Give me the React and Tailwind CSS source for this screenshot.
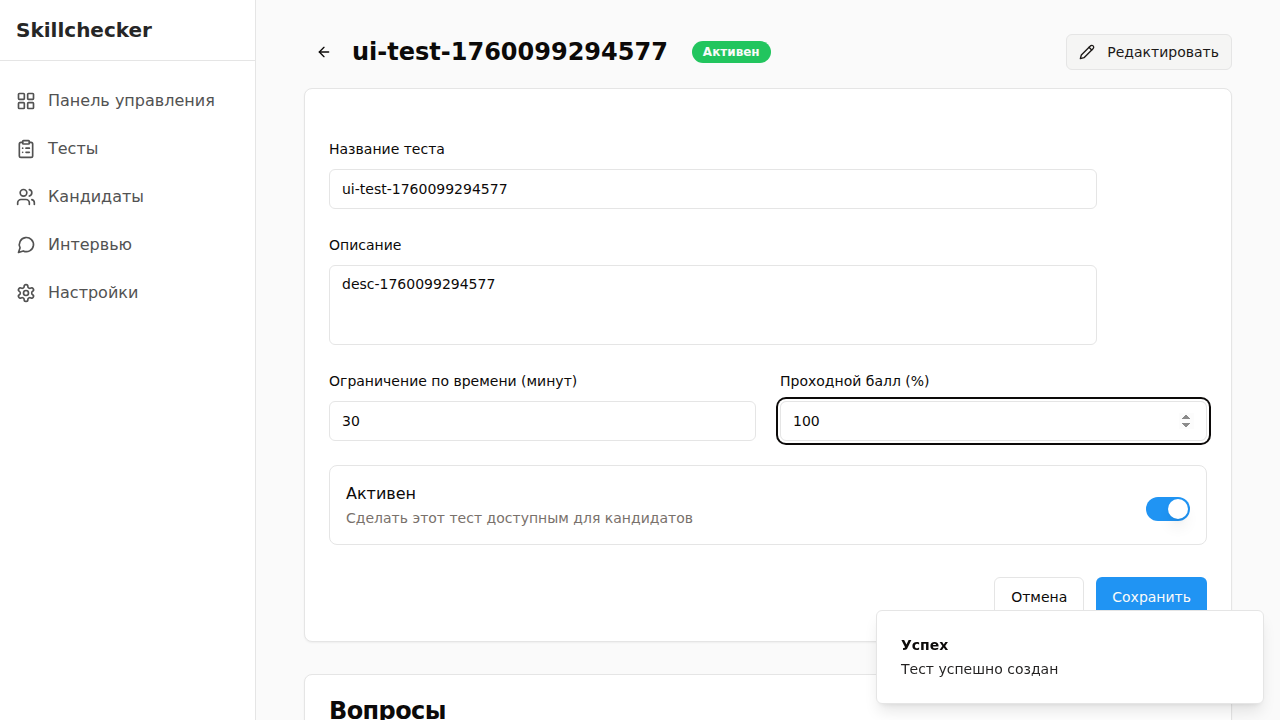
import React, { useState } from "react";
import { ArrowLeft, ClipboardList, LayoutGrid, Users } from "lucide-react";

function OutlineIcon({ size = 20, children }) {
  return (
    <svg
      width={size}
      height={size}
      viewBox="0 0 24 24"
      fill="none"
      stroke="currentColor"
      strokeWidth="2"
      strokeLinecap="round"
      strokeLinejoin="round"
      aria-hidden="true"
    >
      {children}
    </svg>
  );
}

function MessageIcon({ size }) {
  return (
    <OutlineIcon size={size}>
      <path d="m3 21 1.9-5.7a8.5 8.5 0 1 1 3.8 3.8z" />
    </OutlineIcon>
  );
}

function GearIcon({ size }) {
  return (
    <OutlineIcon size={size}>
      <path d="M12.22 2h-.44a2 2 0 0 0-2 2v.18a2 2 0 0 1-1 1.73l-.43.25a2 2 0 0 1-2 0l-.15-.08a2 2 0 0 0-2.73.73l-.22.38a2 2 0 0 0 .73 2.73l.15.1a2 2 0 0 1 1 1.72v.51a2 2 0 0 1-1 1.74l-.15.09a2 2 0 0 0-.73 2.73l.22.38a2 2 0 0 0 2.73.73l.15-.08a2 2 0 0 1 2 0l.43.25a2 2 0 0 1 1 1.73V20a2 2 0 0 0 2 2h.44a2 2 0 0 0 2-2v-.18a2 2 0 0 1 1-1.73l.43-.25a2 2 0 0 1 2 0l.15.08a2 2 0 0 0 2.73-.73l.22-.39a2 2 0 0 0-.73-2.73l-.15-.08a2 2 0 0 1-1-1.74v-.5a2 2 0 0 1 1-1.74l.15-.09a2 2 0 0 0 .73-2.73l-.22-.38a2 2 0 0 0-2.73-.73l-.15.08a2 2 0 0 1-2 0l-.43-.25a2 2 0 0 1-1-1.73V4a2 2 0 0 0-2-2z" />
      <circle cx="12" cy="12" r="3" />
    </OutlineIcon>
  );
}

function PencilIcon({ size }) {
  return (
    <OutlineIcon size={size}>
      <path d="M17 3a2.85 2.83 0 1 1 4 4L7.5 20.5 2 22l1.5-5.5Z" />
      <path d="m15 5 4 4" />
    </OutlineIcon>
  );
}

const navItems = [
  { label: "Панель управления", icon: LayoutGrid },
  { label: "Тесты", icon: ClipboardList },
  { label: "Кандидаты", icon: Users },
  { label: "Интервью", icon: MessageIcon },
  { label: "Настройки", icon: GearIcon },
];

const fieldClass =
  "block w-full rounded-md border border-[#e5e5e5] bg-white px-3 text-sm text-stone-950 outline-none";

function Field({ id, label, children }) {
  return (
    <div className="flex flex-col gap-2">
      <label htmlFor={id} className="text-sm/6 font-medium">
        {label}
      </label>
      {children}
    </div>
  );
}

function Sidebar() {
  return (
    <aside className="sticky top-0 h-screen w-64 shrink-0 border-r border-[#e5e5e5] bg-white">
      <div className="border-b border-[#e5e5e5] p-4">
        <div className="text-xl font-bold text-neutral-800">Skillchecker</div>
      </div>
      <nav className="flex flex-col gap-2 px-4 py-5">
        {navItems.map(({ label, icon: Icon }) => (
          <a key={label} href="#" className="flex items-center gap-3 py-2 text-base text-neutral-600">
            <Icon size={20} />
            <span>{label}</span>
          </a>
        ))}
      </nav>
    </aside>
  );
}

function TestForm() {
  const [active, setActive] = useState(true);
  return (
    <form
      onSubmit={(e) => e.preventDefault()}
      className="flex flex-col gap-6 rounded-lg border border-[#e5e5e5] bg-white px-6 pt-12 pb-6 shadow-xs"
    >
      <div className="max-w-3xl">
        <Field id="name" label="Название теста">
          <input id="name" type="text" defaultValue="ui-test-1760099294577" className={`${fieldClass} h-10`} />
        </Field>
      </div>
      <div className="max-w-3xl">
        <Field id="description" label="Описание">
          <textarea
            id="description"
            defaultValue="desc-1760099294577"
            className={`${fieldClass} h-20 resize-none py-2`}
          />
        </Field>
      </div>
      <div className="grid grid-cols-2 gap-6">
        <Field id="time" label="Ограничение по времени (минут)">
          <input id="time" type="number" defaultValue="30" className={`${fieldClass} h-10`} />
        </Field>
        <Field id="score" label="Проходной балл (%)">
          <input
            id="score"
            type="number"
            defaultValue="100"
            className={`${fieldClass} h-10 ring-2 ring-stone-950 ring-offset-2 [&::-webkit-inner-spin-button]:opacity-100`}
          />
        </Field>
      </div>
      <div className="flex items-center justify-between rounded-lg border border-[#e5e5e5] p-4">
        <div className="flex flex-col gap-0.5">
          <label htmlFor="active" className="text-base font-medium">
            Активен
          </label>
          <p className="text-sm text-stone-500">Сделать этот тест доступным для кандидатов</p>
        </div>
        <input
          id="active"
          type="checkbox"
          role="switch"
          checked={active}
          onChange={(e) => setActive(e.target.checked)}
          className="mt-2 flex h-6 w-11 shrink-0 cursor-pointer appearance-none items-center rounded-full bg-stone-200 p-0.5 before:size-5 before:rounded-full before:bg-white before:shadow-lg before:content-[''] checked:justify-end checked:bg-[#2094f3]"
        />
      </div>
      <div className="flex justify-end gap-3 pt-2">
        <button
          type="button"
          className="h-10 rounded-md border border-[#e5e5e5] bg-white px-4 text-sm font-medium"
        >
          Отмена
        </button>
        <button type="submit" className="h-10 rounded-md bg-[#2094f3] px-4 text-sm font-medium text-stone-50">
          Сохранить
        </button>
      </div>
    </form>
  );
}

export default function App() {
  return (
    <div className="flex min-h-screen bg-neutral-50 font-['DejaVu_Sans',sans-serif] text-stone-950">
      <Sidebar />
      <main className="flex min-w-0 flex-1 flex-col px-12 py-8">
        <header className="mb-4 flex items-center justify-between">
          <div className="flex items-center gap-2">
            <button type="button" aria-label="Назад" className="flex size-10 items-center justify-center rounded-md">
              <ArrowLeft size={16} />
            </button>
            <div className="flex items-center gap-6">
              <h1 className="text-2xl font-bold">ui-test-1760099294577</h1>
              <span className="rounded-full border border-transparent bg-[#22c55e] px-2.5 py-0.5 text-xs font-semibold text-stone-50">
                Активен
              </span>
            </div>
          </div>
          <button
            type="button"
            className="flex h-9 items-center gap-3 rounded-md border border-[#e5e5e5] bg-stone-100 px-3 text-sm font-medium text-stone-900"
          >
            <PencilIcon size={16} />
            Редактировать
          </button>
        </header>
        <TestForm />
        <section className="mt-8 rounded-lg border border-[#e5e5e5] bg-white p-6 shadow-xs">
          <h2 className="text-2xl/6 font-semibold tracking-tight">Вопросы</h2>
        </section>
      </main>
      <div
        role="status"
        className="fixed right-4 bottom-4 flex w-97 flex-col gap-1 rounded-md border border-[#e5e5e5] bg-white p-6 text-sm shadow-lg"
      >
        <div className="font-semibold">Успех</div>
        <div className="opacity-90">Тест успешно создан</div>
      </div>
    </div>
  );
}
